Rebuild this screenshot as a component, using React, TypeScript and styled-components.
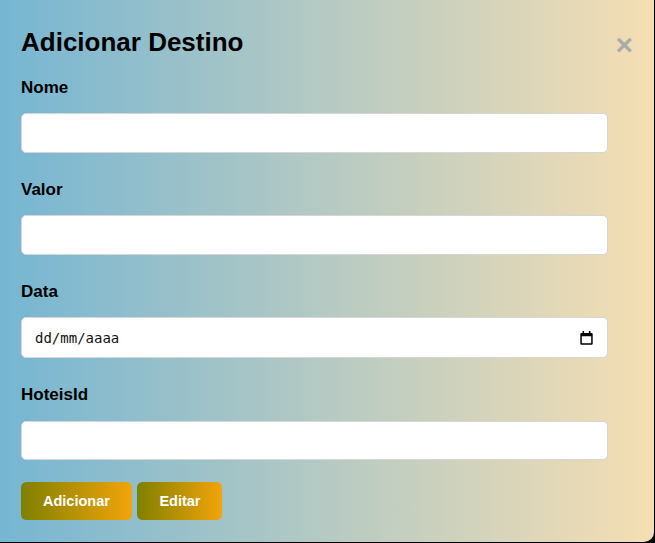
import React from "react";
import styled, { createGlobalStyle } from "styled-components";

const Global = createGlobalStyle`
  html, body {
    margin: 0;
    padding: 0;
    height: 543px;
    overflow: hidden;
    background: #000;
    font-family: "Liberation Sans", Arial, sans-serif;
  }
  * { box-sizing: border-box; }
`;

const Modal = styled.div`
  margin: -10px 1px 0 -10px;
  padding: 36.5px 21px 22px 31px;
  border-radius: 10px;
  background: linear-gradient(to right, #74b5d3, #f5deb3);
  color: #000;
`;

const Header = styled.div`
  display: flex;
  justify-content: space-between;
  align-items: flex-start;
  margin-bottom: 18px;
`;

const Title = styled.h2`
  margin: 0;
  font-size: 26px;
  line-height: 30px;
  font-weight: bold;
`;

const Close = styled.button`
  margin-top: 3px;
  padding: 0;
  border: none;
  background: none;
  color: #aaa;
  font-family: "Liberation Sans", Arial, sans-serif;
  font-size: 30px;
  line-height: 30px;
  font-weight: bold;
  cursor: pointer;
`;

const Form = styled.form`
  display: flex;
  flex-direction: column;
`;

const Fields = styled.div`
  display: flex;
  flex-direction: column;
  margin-right: 25px;
`;

const Label = styled.label`
  display: block;
  font-size: 17px;
  line-height: 20px;
  font-weight: bold;
  margin-bottom: 15.5px;
`;

const Input = styled.input<{ $last?: boolean }>`
  display: block;
  width: 100%;
  height: 39.5px;
  margin: 0 0 ${(p) => (p.$last ? "22px" : "27px")};
  padding: 0 12px;
  border: 1px solid #d6d6d6;
  border-radius: 5px;
  background: #fff;
  font-family: "Liberation Sans", Arial, sans-serif;
  font-size: 15px;
  outline: none;
`;

const DateBox = styled.div`
  display: flex;
  align-items: center;
  justify-content: space-between;
  width: 100%;
  height: 41px;
  margin-bottom: 27px;
  padding: 0 14px 0 13px;
  border: 1px solid #d6d6d6;
  border-radius: 5px;
  background: #fff;
`;

const DateText = styled.input`
  flex: 1;
  border: none;
  outline: none;
  padding: 0;
  background: transparent;
  font-family: "DejaVu Sans Mono", "Liberation Mono", monospace;
  font-size: 14px;
  color: #111;
  &::placeholder { color: #111; opacity: 1; }
`;

const CalendarIcon = styled.svg`
  display: block;
  width: 13px;
  height: 14px;
  flex: none;
`;

const Actions = styled.div`
  display: flex;
  gap: 5.5px;
`;

const Button = styled.button`
  height: 38px;
  padding: 0 22px;
  border: none;
  border-radius: 5.5px;
  background: linear-gradient(to right, #808000, #f2a40a);
  color: #fff;
  font-family: "Liberation Sans", Arial, sans-serif;
  font-size: 14.5px;
  font-weight: bold;
  cursor: pointer;
`;

export default function App() {
  return (
    <>
      <Global />
      <Modal>
        <Header>
          <Title>Adicionar Destino</Title>
          <Close type="button" aria-label="Fechar">×</Close>
        </Header>
        <Form onSubmit={(e) => e.preventDefault()}>
          <Fields>
            <Label htmlFor="nome">Nome</Label>
            <Input id="nome" type="text" />
            <Label htmlFor="valor">Valor</Label>
            <Input id="valor" type="text" />
            <Label htmlFor="data">Data</Label>
            <DateBox>
              <DateText id="data" type="text" placeholder="dd/mm/aaaa" />
              <CalendarIcon viewBox="0 0 13 14" aria-hidden="true">
                <rect x="2.5" y="0" width="1.6" height="2.5" fill="#000" />
                <rect x="8.9" y="0" width="1.6" height="2.5" fill="#000" />
                <path
                  d="M1.5 2h10a1.2 1.2 0 0 1 1.2 1.2v9.3a1.2 1.2 0 0 1-1.2 1.2h-10A1.2 1.2 0 0 1 .3 12.5V3.2A1.2 1.2 0 0 1 1.5 2Zm.3 3.3v6.9h9.4V5.3Z"
                  fill="#000"
                  fillRule="evenodd"
                />
              </CalendarIcon>
            </DateBox>
            <Label htmlFor="hoteis">HoteisId</Label>
            <Input id="hoteis" type="text" $last />
          </Fields>
          <Actions>
            <Button type="submit">Adicionar</Button>
            <Button type="button">Editar</Button>
          </Actions>
        </Form>
      </Modal>
    </>
  );
}
